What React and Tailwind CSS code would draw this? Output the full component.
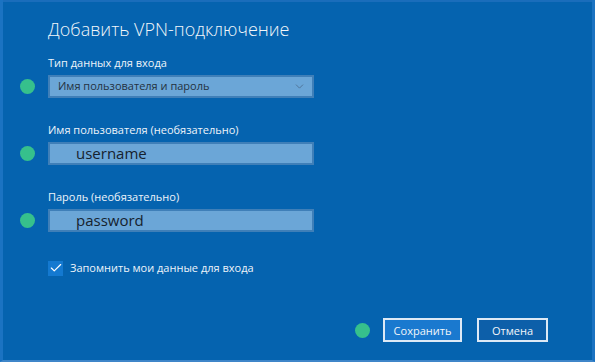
import { Check, ChevronDown } from 'lucide-react';

const font = { fontFamily: '"Open Sans", "Noto Sans", sans-serif' };

function Dot() {
  return <span className="w-[15px] h-[15px] rounded-full bg-[#36c08c] shrink-0" />;
}

function Field({ label, children }) {
  return (
    <div className="flex flex-col">
      <div className="pl-[48px] text-[11px] text-[#eef4fa] leading-4 mb-[4px]">{label}</div>
      <div className="flex items-center">
        <div className="w-[48px] flex pl-[20px]">
          <Dot />
        </div>
        {children}
      </div>
    </div>
  );
}

export default function App() {
  return (
    <div
      className="w-[595px] h-[362px] bg-[#0563af] border-l-[3px] border-l-[#1b73c2] border-r-[3px] border-r-[#1b73c2] border-b-2 border-b-[#3f86c9] overflow-hidden flex flex-col"
      style={font}
    >
      <div className="h-[2px] bg-[#1a6dbb]" />
      <h1 className="pl-[45px] pt-[13px] text-[18px] font-light text-[#f2f6fa] leading-7">
        Добавить VPN-подключение
      </h1>

      <div className="mt-[12px] flex flex-col gap-[24px] -ml-[3px]">
        <Field label="Тип данных для входа">
          <div className="w-[266px] h-[23px] bg-[#6ba6d7] border-2 border-[#3f7fb8] flex items-center justify-between pl-[8px] pr-[6px]">
            <span className="text-[11px] text-[#24323f]">Имя пользователя и пароль</span>
            <ChevronDown className="w-[13px] h-[13px] text-[#4a6a8c]" strokeWidth={1.5} />
          </div>
        </Field>
        <Field label="Имя пользователя (необязательно)">
          <div className="w-[266px] h-[23px] bg-[#6ba6d7] border-2 border-[#3f7fb8] flex items-center pl-[26px]">
            <span className="text-[15px] text-[#16222e] leading-none">username</span>
          </div>
        </Field>
        <Field label="Пароль (необязательно)">
          <div className="w-[266px] h-[23px] bg-[#6ba6d7] border-2 border-[#3f7fb8] flex items-center pl-[26px]">
            <span className="text-[15px] text-[#16222e] leading-none">password</span>
          </div>
        </Field>
      </div>

      <div className="mt-[28px] pl-[45px] flex items-center gap-[7px] h-[16px]">
        <span className="w-[15px] h-[15px] bg-[#1479d0] flex items-center justify-center">
          <Check className="w-[14px] h-[14px] text-white" strokeWidth={2} />
        </span>
        <span className="text-[11px] text-[#eef4fa]">Запомнить мои данные для входа</span>
      </div>

      <div className="mt-auto mb-[18px] flex items-center justify-end pr-[44px]">
        <Dot />
        <button className="ml-[13px] w-[79px] h-[24px] bg-[#1a79cf] border-2 border-[#dde9f5] text-[11px] text-[#f2f6fa] leading-none">
          Сохранить
        </button>
        <button className="ml-[15px] w-[71px] h-[24px] bg-[#0d5fa9] border-2 border-[#dde9f5] text-[11px] text-[#f2f6fa] leading-none">
          Отмена
        </button>
      </div>
    </div>
  );
}
